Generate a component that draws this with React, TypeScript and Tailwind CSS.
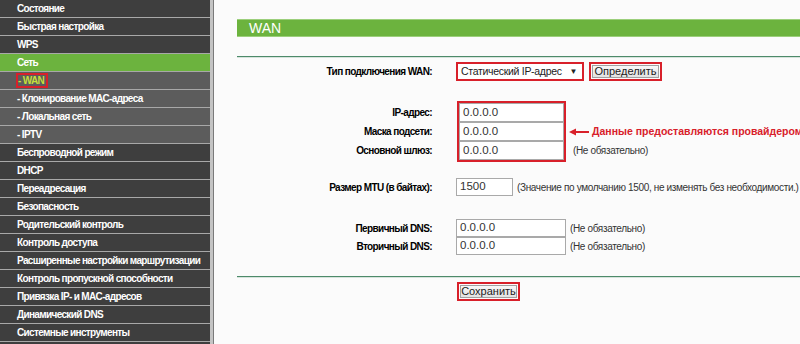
const menu: { label: string; kind: "top" | "sub" | "active" | "current" }[] = [
  { label: "Состояние", kind: "top" },
  { label: "Быстрая настройка", kind: "top" },
  { label: "WPS", kind: "top" },
  { label: "Сеть", kind: "active" },
  { label: "- WAN", kind: "current" },
  { label: "- Клонирование MAC-адреса", kind: "sub" },
  { label: "- Локальная сеть", kind: "sub" },
  { label: "- IPTV", kind: "sub" },
  { label: "Беспроводной режим", kind: "top" },
  { label: "DHCP", kind: "top" },
  { label: "Переадресация", kind: "top" },
  { label: "Безопасность", kind: "top" },
  { label: "Родительский контроль", kind: "top" },
  { label: "Контроль доступа", kind: "top" },
  { label: "Расширенные настройки маршрутизации", kind: "top" },
  { label: "Контроль пропускной способности", kind: "top" },
  { label: "Привязка IP- и MAC-адресов", kind: "top" },
  { label: "Динамический DNS", kind: "top" },
  { label: "Системные инструменты", kind: "top" },
];

function MenuItem({ label, kind }: { label: string; kind: string }) {
  const bg =
    kind === "active" ? "bg-[#6cb33e]" : kind === "top" ? "bg-[#3e3e3e]" : "bg-[#5c5c5c]";
  return (
    <div className={`h-[18px] shrink-0 border-b border-[#a8a8a8] ${bg} flex items-center pl-[17px] whitespace-nowrap`}>
      {kind === "current" ? (
        <span className="ml-[-1px] border-2 border-[#d8202a] pr-[2px] leading-[11px] text-[#c6df3a]">{label}</span>
      ) : (
        <span className="text-white">{label}</span>
      )}
    </div>
  );
}

function Field({ value, w = "w-[105px]", h = "h-[18px]" }: { value: string; w?: string; h?: string }) {
  return (
    <div className={`${w} ${h} shrink-0 border border-[#a9a9a9] bg-white pl-[3px] flex items-center text-[11.5px] text-[#333]`}>
      {value}
    </div>
  );
}

function Label({ text, h = "h-[18px]" }: { text: string; h?: string }) {
  return (
    <div className={`w-[195px] ${h} shrink-0 flex items-center justify-end font-bold text-[10px] tracking-[-0.6px] text-black whitespace-nowrap`}>
      {text}
    </div>
  );
}

function Hint({ text }: { text: string }) {
  return <span className="ml-[4px] text-[10px] tracking-[-0.35px] text-[#333] whitespace-nowrap">{text}</span>;
}

export default function App() {
  return (
    <div
      className="w-[800px] h-[344px] overflow-hidden flex bg-[#fbfbfb]"
      style={{ fontFamily: '"Liberation Sans", Arial, sans-serif' }}
    >
      <div className="w-[210px] shrink-0 flex flex-col bg-[#3e3e3e] font-bold text-[10px] tracking-[-0.65px]">
        {menu.map((m) => (
          <MenuItem key={m.label} label={m.label} kind={m.kind} />
        ))}
      </div>
      <div className="w-[3px] shrink-0 bg-[#c4c4c4]" />
      <div className="w-[1px] shrink-0 bg-[#7a7a7a]" />
      <div className="flex-1 min-w-0 pl-[23px] pt-[19px]">
        <div className="h-[18px] bg-[#6cb33e] border-y border-[#9ccf7c] flex items-center pl-[12px] text-white text-[14px]">
          WAN
        </div>
        <div className="mt-[19px] h-[2px] border-t border-[#4d8a6a] bg-[#d6e4dc]" />

        <div className="mt-[4px] flex items-center h-[19px]">
          <Label text="Тип подключения WAN:" />
          <div className="ml-[24px] w-[128px] h-[19px] shrink-0 border-2 border-[#d8202a] bg-white flex items-center justify-between pl-[3px] pr-[5px] text-[10.5px] tracking-[-0.3px] text-[#222] whitespace-nowrap">
            <span>Статический IP-адрес</span>
            <span className="text-[8px]">▼</span>
          </div>
          <div className="ml-[5px] h-[19px] shrink-0 border-2 border-[#d8202a] p-[1px]">
            <div className="h-[13px] w-[67px] border border-[#a0a0a0] bg-gradient-to-b from-[#f8f8f8] to-[#e2e2e2] flex items-center justify-center text-[11px] text-[#222]">
              Определить
            </div>
          </div>
        </div>

        <div className="mt-[20px] flex">
          <div className="flex flex-col pt-[2px]">
            <Label text="IP-адрес:" h="h-[19px]" />
            <Label text="Маска подсети:" h="h-[19px]" />
            <Label text="Основной шлюз:" h="h-[19px]" />
          </div>
          <div className="ml-[25px] border-2 border-[#d8202a] flex flex-col">
            <Field value="0.0.0.0" h="h-[19px]" />
            <Field value="0.0.0.0" h="h-[19px]" />
            <Field value="0.0.0.0" h="h-[19px]" />
          </div>
          <div className="ml-[3px] flex flex-col pt-[21px]">
            <div className="flex items-center h-[19px]">
              <svg width="20" height="8" viewBox="0 0 20 8" className="mr-[3px] shrink-0">
                <path d="M0 4 L7 0.5 L7 7.5 Z" fill="#d8202a" />
                <rect x="6" y="3" width="14" height="2" fill="#d8202a" />
              </svg>
              <span className="text-[10.5px] font-bold text-[#d8202a] whitespace-nowrap">
                Данные предоставляются провайдером
              </span>
            </div>
            <div className="h-[19px] flex items-center">
              <Hint text="(Не обязательно)" />
            </div>
          </div>
        </div>

        <div className="mt-[16px] flex items-center">
          <Label text="Размер MTU (в байтах):" />
          <div className="ml-[24px]">
            <Field value="1500" w="w-[57px]" />
          </div>
          <Hint text="(Значение по умолчанию 1500, не изменять без необходимости.)" />
        </div>

        <div className="mt-[23px] flex items-center">
          <Label text="Первичный DNS:" />
          <div className="ml-[24px]">
            <Field value="0.0.0.0" w="w-[110px]" />
          </div>
          <Hint text="(Не обязательно)" />
        </div>
        <div className="flex items-center">
          <Label text="Вторичный DNS:" />
          <div className="ml-[24px]">
            <Field value="0.0.0.0" w="w-[110px]" />
          </div>
          <Hint text="(Не обязательно)" />
        </div>

        <div className="mt-[21px] h-[2px] border-t border-[#4d8a6a] bg-[#d6e4dc]" />

        <div className="mt-[4px] ml-[220px] w-fit h-[19px] border-2 border-[#d8202a] p-[1px]">
          <div className="h-[13px] w-[57px] border border-[#a0a0a0] bg-gradient-to-b from-[#f8f8f8] to-[#e2e2e2] flex items-center justify-center text-[11px] text-[#222]">
            Сохранить
          </div>
        </div>
      </div>
    </div>
  );
}
